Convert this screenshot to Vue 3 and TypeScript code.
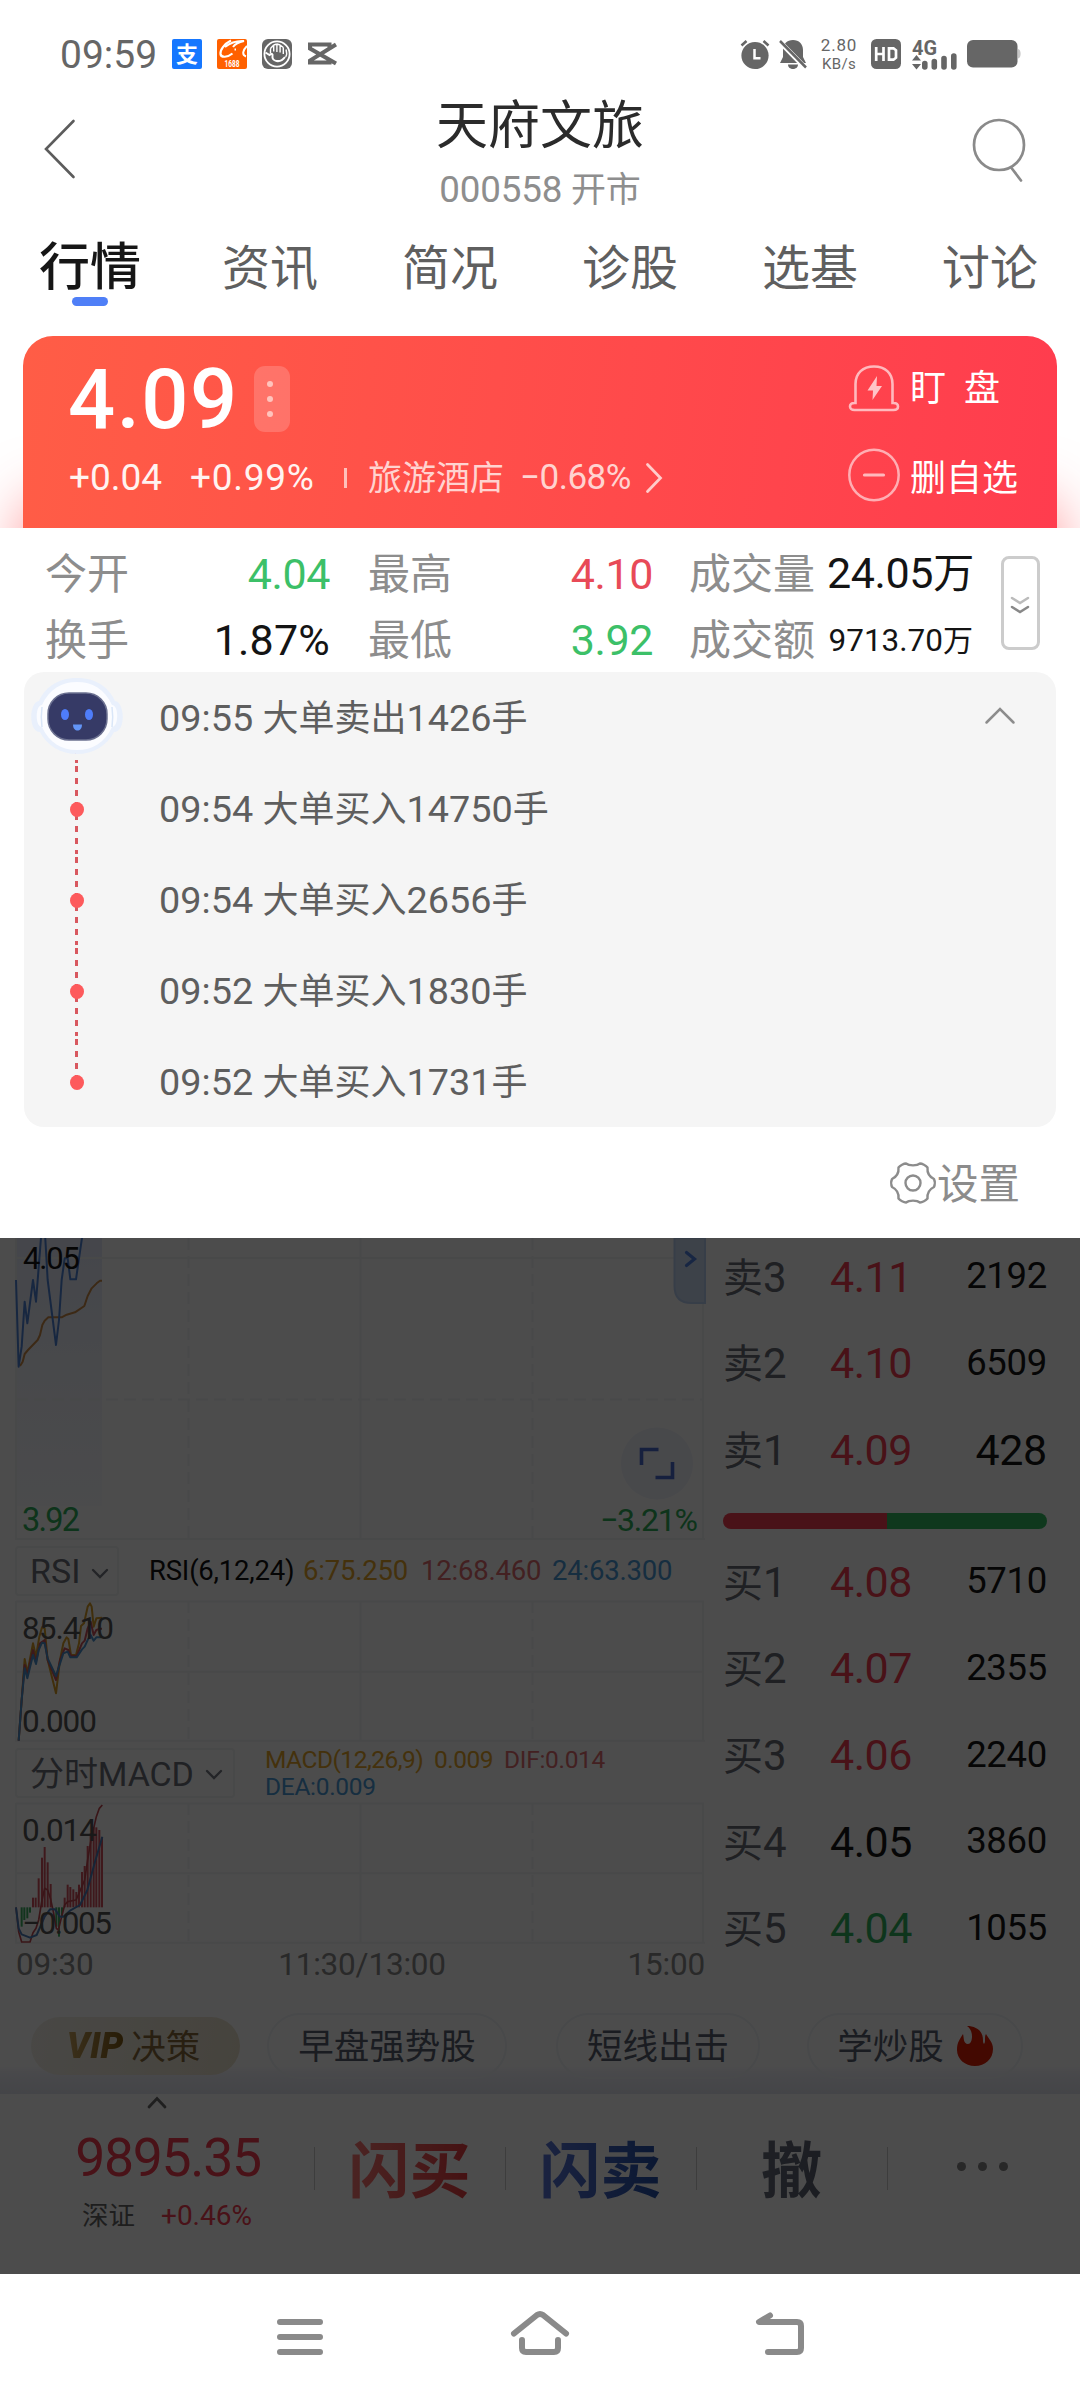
<script setup lang="ts">
import { h } from 'vue'

interface Tab { label: string; active?: boolean }
interface Alert { time: string; text: string }
interface Level { label: string; price: string; volume: string; tone: 'up' | 'down' | 'flat'; big?: boolean }

/* Sets Latin/numeric runs slightly larger than the surrounding Chinese glyphs */
const Mix = (props: { t: string }) =>
  (props.t.match(/[\u4e00-\u9fff]+|[^\u4e00-\u9fff]+/g) ?? []).map((part) =>
    h('span', { class: /[\u4e00-\u9fff]/.test(part) ? 'mix-zh' : 'mix-num' }, part),
  )
Mix.props = ['t']

const tabs: Tab[] = [
  { label: '行情', active: true },
  { label: '资讯' },
  { label: '简况' },
  { label: '诊股' },
  { label: '选基' },
  { label: '讨论' },
]

const alerts: Alert[] = [
  { time: '09:55', text: '大单卖出1426手' },
  { time: '09:54', text: '大单买入14750手' },
  { time: '09:54', text: '大单买入2656手' },
  { time: '09:52', text: '大单买入1830手' },
  { time: '09:52', text: '大单买入1731手' },
]

const asks: Level[] = [
  { label: '卖3', price: '4.11', volume: '2192', tone: 'up' },
  { label: '卖2', price: '4.10', volume: '6509', tone: 'up' },
  { label: '卖1', price: '4.09', volume: '428', tone: 'up', big: true },
]
const bids: Level[] = [
  { label: '买1', price: '4.08', volume: '5710', tone: 'up' },
  { label: '买2', price: '4.07', volume: '2355', tone: 'up' },
  { label: '买3', price: '4.06', volume: '2240', tone: 'up' },
  { label: '买4', price: '4.05', volume: '3860', tone: 'flat' },
  { label: '买5', price: '4.04', volume: '1055', tone: 'down' },
]

/* MACD histogram: [x, end y], measured from the zero axis at 1102 */
const macdUp: [number, number][] = [
  [99, 1073], [107, 1073], [116, 1015], [126, 953], [134, 921], [143, 967], [152, 1032],
  [194, 1073], [203, 1034], [211, 1041], [220, 1048], [229, 1056], [237, 1034], [246, 996],
  [254, 978], [263, 918], [272, 880], [281, 862], [289, 862], [298, 870], [306, 892],
]
const macdDown: [number, number][] = [
  [65, 1160], [73, 1140], [82, 1135], [90, 1118], [169, 1160], [177, 1190], [186, 1130],
]
</script>

<template>
  <div class="screen">
    <header class="status">
      <span class="clock">09:59</span>
      <svg class="s-icon" width="30" height="30" viewBox="0 0 30 30">
        <rect width="30" height="30" rx="2" fill="#1677ff" />
        <text x="15" y="23" font-size="22" font-weight="700" fill="#fff" text-anchor="middle">支</text>
      </svg>
      <svg class="s-icon" width="30" height="30" viewBox="0 0 30 30">
        <rect width="30" height="30" rx="2" fill="#ff6000" />
        <path d="M14 1.500C7 5 3 11 3.500 15s7 3.500 12-.5" fill="none" stroke="#fff" stroke-width="2.200" />
        <path d="M8 8C13 4 20 1.500 27 2c-5 1-9 3-11 6M30 7c-4 4-5.500 9-1 10.500M17.500 10.500h1.500" fill="none" stroke="#fff" stroke-width="2" />
        <text x="15" y="28.400" font-size="9.500" font-weight="700" fill="#fff" text-anchor="middle" textLength="15" lengthAdjust="spacingAndGlyphs">1688</text>
      </svg>
      <svg class="s-icon" width="30" height="30" viewBox="0 0 30 30">
        <rect width="30" height="30" rx="6" fill="#666" />
        <circle cx="15" cy="15" r="12.600" fill="none" stroke="#fff" stroke-width="1.800" />
        <path d="M8.500 14V9.500M11.700 12.500V6M14.900 13V5M18.100 13.500V6M21.300 15V8.500M8.500 9.500l3.200-3.500M11.700 6l3.200-1M18.100 6l-3.200-1M21.300 8.500L18.100 6M24 10.500c1 3 .8 5.500-.3 7.500" fill="none" stroke="#fff" stroke-width="1.400" />
        <path d="M3.500 13.500l4 2.500c2-2 3.500-1 3 1-.5 2.500 1 4.500 4 5s6-.5 8.500-4" fill="none" stroke="#fff" stroke-width="2" />
      </svg>
      <svg class="s-icon" width="30" height="24" viewBox="0 0 30 24">
        <path d="M29 2.500L3 18.500v2h19.500v-3M29 21.500L3 6.500v-4h19.500v3" fill="none" stroke="#666" stroke-width="4" />
      </svg>

      <span class="grow"></span>

      <svg width="30" height="31" viewBox="0 0 30 31">
        <circle cx="15" cy="16.500" r="13.600" fill="#666" />
        <path d="M1.500 6.500l5-4.500M28.500 6.500l-5-4.500" stroke="#666" stroke-width="2.600" />
        <path d="M14.500 10v9.300h6" fill="none" stroke="#fff" stroke-width="2.500" />
      </svg>
      <svg class="bell" width="28" height="31" viewBox="0 0 28 31">
        <path d="M14 1c6 0 10 4 10 10v7l3 6H1l3-6v-7C4 5 8 1 14 1zM9 25.500h10c0 6-10 6-10 0z" fill="#666" />
        <path d="M-1 1L27 29.500" stroke="#fff" stroke-width="5" />
        <path d="M1 2l26 26.500" stroke="#666" stroke-width="2.500" />
      </svg>
      <span class="speed"><b>2.80</b><i>KB/s</i></span>
      <svg class="hd" width="30" height="30" viewBox="0 0 30 30">
        <rect width="30" height="30" rx="5.500" fill="#666" />
        <path d="M5.200 8v14M12.500 8v14M5 15h8M18 9.300h4.500l2.500 2v7.400l-2.500 2H18z" fill="none" stroke="#fff" stroke-width="2.700" />
      </svg>
      <svg class="signal" width="46" height="31" viewBox="0 0 46 31">
        <text x="0" y="15.500" font-size="20.500" font-weight="700" fill="#666" textLength="25" lengthAdjust="spacingAndGlyphs">4G</text>
        <path d="M4.500 16l4.500 5.500H0zM4.500 30.500L9 25H0z" fill="#666" />
        <path d="M12.800 24.500v3.500M22.300 22.500v5.500M32 19.500V28M41.800 17v11" stroke="#666" stroke-width="5.600" stroke-linecap="round" />
      </svg>
      <svg class="battery" width="54" height="28" viewBox="0 0 54 28">
        <rect x="0" y="0" width="50.500" height="27.500" rx="6" fill="#666" />
        <path d="M51 9c3.500 0 3.500 9.500 0 9.500z" fill="#c8c8c8" />
      </svg>
    </header>

    <div class="titlebar">
      <svg class="back" width="34" height="62" viewBox="0 0 34 62">
        <path d="M30.500 3L3 31l27.500 28" fill="none" stroke="#5c5c5c" stroke-width="2.600" stroke-linecap="round" />
      </svg>
      <div class="names">
        <div class="name">天府文旅</div>
        <div class="code"><Mix t="000558 开市" /></div>
      </div>
      <svg class="search" width="56" height="66" viewBox="0 0 56 66">
        <circle cx="28" cy="28" r="25" fill="none" stroke="#8a8a8a" stroke-width="2.700" />
        <path d="M40.500 51l9.500 12.500" stroke="#8a8a8a" stroke-width="2.700" stroke-linecap="round" />
      </svg>
    </div>

    <nav class="tabs">
      <div v-for="t in tabs" :key="t.label" class="tab" :class="{ active: t.active }">
        <span>{{ t.label }}</span>
        <i v-if="t.active"></i>
      </div>
    </nav>

    <section class="hero">
      <div class="card">
        <div class="quote">
          <div class="price-line">
            <span class="price">4.09</span>
            <span class="more"><i></i><i></i><i></i></span>
          </div>
          <div class="change-line">
            <span class="chg">+0.04</span>
            <span class="pct">+0.99%</span>
            <span class="bar"></span>
            <span class="sector">旅游酒店</span>
            <span class="sector-pct">−0.68%</span>
            <svg width="18" height="32" viewBox="0 0 18 32">
              <path d="M2.500 2.500L15.500 16 2.500 29.500" fill="none" stroke="#ffcdcb" stroke-width="2.800" stroke-linecap="round" />
            </svg>
          </div>
        </div>
        <div class="actions">
          <div class="action">
            <svg width="52" height="48" viewBox="0 0 52 48">
              <path d="M7.500 39V20C7.500 9 15 2.500 26 2.500S44.500 9 44.500 20v19h1c6 0 6 7 0 7h-39c-6 0-6-7 0-7z" fill="none" stroke="#ffb9bd" stroke-width="2.600" />
              <path d="M29 12L19.500 26.500h5.500L24.500 36 34 22h-5.500z" fill="#ffc4c7" />
            </svg>
            <span class="watch">盯<em></em>盘</span>
          </div>
          <div class="action second">
            <svg width="52" height="54" viewBox="0 0 52 54">
              <ellipse cx="26" cy="27" rx="24.700" ry="25.300" fill="none" stroke="#ffaeb3" stroke-width="2.500" />
              <path d="M16.500 27h19" stroke="#ffb9bd" stroke-width="3.200" stroke-linecap="round" />
            </svg>
            <span>删自选</span>
          </div>
        </div>
      </div>
    </section>

    <section class="stats">
      <div class="grid">
        <span class="k">今开</span><span class="v green">4.04</span>
        <span class="k">最高</span><span class="v red">4.10</span>
        <span class="k">成交量</span><span class="v"><Mix t="24.05万" /></span>
        <span class="k">换手</span><span class="v">1.87%</span>
        <span class="k">最低</span><span class="v green">3.92</span>
        <span class="k">成交额</span><span class="v small"><Mix t="9713.70万" /></span>
      </div>
      <div class="expand">
        <svg width="20" height="20" viewBox="0 0 20 20" fill="none" stroke-width="2.500" stroke-linecap="round">
          <path d="M2 3l8 5 8-5" stroke="#bbb" />
          <path d="M2 12l8 5 8-5" stroke="#888" />
        </svg>
      </div>
    </section>

    <section class="alerts">
      <div v-for="(a, i) in alerts" :key="i" class="alert" :class="{ first: i === 0, last: i === alerts.length - 1 }">
        <div class="rail">
          <svg v-if="i === 0" class="robot" width="94" height="78" viewBox="0 0 94 78">
            <path d="M9 24C16 8 31 1 47 1s31 7 38 23c10 1 11 31-1 31C77 69 63 77 47 77S17 69 10 55C-2 55-1 25 9 24z" fill="#e9f0fc" />
            <path d="M12 28C19 12 32 5 47 5s28 7 35 23c7 0 7 22 0 22C75 66 62 73 47 73S19 66 12 50c-7 0-7-22 0-22z" fill="#fbfcff" />
            <path d="M12 30c-1 7-1 13 0 20M82 30c1 7 1 13 0 20" fill="none" stroke="#d9e6f8" stroke-width="1.500" />
            <rect x="18" y="16" width="59" height="47" rx="21" fill="#363a66" stroke="#6b7090" stroke-width="1.500" />
            <ellipse cx="35" cy="37.500" rx="4" ry="5.500" fill="#4f7dfa" />
            <ellipse cx="59" cy="37.500" rx="4" ry="5.500" fill="#4f7dfa" />
            <path d="M43 47.500h9c0 8-9 8-9 0z" fill="#6395f7" />
          </svg>
          <i v-else class="dot"></i>
        </div>
        <div class="msg"><Mix :t="a.time + ' ' + a.text" /></div>
        <svg v-if="i === 0" class="fold" width="32" height="20" viewBox="0 0 32 20">
          <path d="M2.500 16.500L16 3l13.500 13.500" fill="none" stroke="#8c8c8c" stroke-width="2.500" stroke-linecap="round" />
        </svg>
      </div>
    </section>

    <div class="settings">
      <svg width="46" height="44" viewBox="-23 -22 46 44" fill="none" stroke="#8c8c8c" stroke-width="2.400" stroke-linejoin="round">
        <path d="M-7-19.500C-4-17 4-17 7-19.500c2 0 6 2 7.500 4C14-10 16-6.500 21-4c1 2 1 6 0 8-5 2.500-7 6-6.500 11.500-1.500 2-5.500 4-7.500 4C4 17-4 17-7 19.500c-2 0-6-2-7.500-4C-14 10-16 6.500-21 4c-1-2-1-6 0-8 5-2.500 7-6 6.500-11.500 1.500-2 5.500-4 7.500-4z" />
        <circle r="7.500" />
      </svg>
      <span>设置</span>
    </div>

    <section class="dimmed">
      <div class="market">
        <div class="charts">
          <svg class="plot" width="712" height="304" viewBox="0 1238 712 304">
            <defs>
              <linearGradient id="area" x1="0" y1="0" x2="0" y2="1">
                <stop offset="0" stop-color="#e6ebfb" />
                <stop offset="1" stop-color="#eef1fa" stop-opacity=".3" />
              </linearGradient>
            </defs>
            <rect x="16" y="1238" width="86" height="268" fill="url(#area)" />
            <g stroke="#f0f4f6" stroke-width="2" fill="none">
              <path d="M16 1238v302M360.500 1238v302M703 1238v302M16 1258h688M15 1539h690" />
              <path d="M16 1399.500h688M188.500 1238v302M532.500 1238v302" stroke-dasharray="12 6" />
            </g>
            <g transform="translate(0 1220) scale(.33333)" fill="none" stroke-width="6" stroke-linejoin="round">
              <path stroke="#c98a48" d="M60 438L68 425 74 402 84 390 113 360 120 345 127 315 134 302 145 292 185 292 200 284 225 277 253 258 263 228 275 205 290 190 300 182 306 182" />
              <path stroke="#4d82d8" d="M48 180L56 440 65 380 74 245 82 310 99 180 108 245 124 40 135 40 143 180 168 375 177 300 185 180 194 115 203 115 211 178 228 178 237 115 248 40" />
            </g>
            <g class="lbl" font-size="31">
              <text x="23" y="1269" fill="#161616" textLength="57">4.05</text>
              <text x="22" y="1531" fill="#2fae5a" font-size="32.500" textLength="58">3.92</text>
              <text x="600" y="1530.500" fill="#2fae5a" font-size="32" textLength="98">−3.21%</text>
            </g>
            <path d="M674.500 1238v48q0 17 17 17H705v-65z" fill="#ccdcf5" stroke="#b9cff2" stroke-width="2" />
            <path d="M686.500 1252.500l8 6.500-8 6.500" fill="none" stroke="#4f7fe0" stroke-width="3.200" stroke-linecap="round" />
            <circle cx="657" cy="1463.500" r="36" fill="#f1f3fc" />
            <path d="M641.500 1465v-15.500h17M655.500 1477.500h17V1462" fill="none" stroke="#4a6cd0" stroke-width="3.600" />
          </svg>

          <div class="indicator rsi">
            <div class="select">
              <span>RSI</span>
              <svg width="18" height="12" viewBox="0 0 18 12"><path d="M2 2l7 7 7-7" fill="none" stroke="#777b84" stroke-width="2.400" stroke-linecap="round" /></svg>
            </div>
            <div class="values">
              <span class="ink">RSI(6,12,24)</span>
              <span class="amber">6:75.250</span>
              <span class="rose">12:68.460</span>
              <span class="sky">24:63.300</span>
            </div>
          </div>

          <svg class="plot" width="712" height="144" viewBox="0 1600 712 144">
            <g stroke="#f0f4f6" stroke-width="2" fill="none">
              <path d="M16 1601v140M360.500 1601v140M703 1601v140M16 1601.500h688M16 1671.700h688M15 1740.700h690" />
              <path d="M188.500 1601v140M532.500 1601v140" stroke-dasharray="12 6" />
            </g>
            <g transform="translate(0 1540) scale(.33333)" fill="none" stroke-width="6" stroke-linejoin="round">
              <path stroke="#d69c26" d="M56 602L65 480 74 357 82 398 99 310 108 350 118 290 126 262 134 265 143 360 168 460 180 360 190 310 200 292 205 297 213 345 228 345 237 310 243 258 252 250 263 200 270 190 275 200 281 260 289 235 306 233" />
              <path stroke="#c9535c" d="M56 602L65 480 74 375 82 405 99 330 108 365 120 310 134 300 143 360 168 420 180 360 194 325 205 330 213 348 230 348 246 310 254 302 263 265 272 245 281 285 289 270 300 266 306 266" />
              <path stroke="#4a90cc" d="M56 602L65 480 74 385 82 415 99 345 108 372 116 330 126 308 134 310 143 355 168 408 177 380 190 340 203 335 211 352 230 352 246 328 254 320 263 300 272 285 281 302 289 292 306 292" />
            </g>
            <g class="lbl" font-size="31.500" fill="#555">
              <text x="22" y="1638.500" textLength="92">85.410</text>
              <text x="22" y="1731.500" textLength="75">0.000</text>
            </g>
          </svg>

          <div class="indicator macd">
            <div class="select">
              <span>分时MACD</span>
              <svg width="18" height="12" viewBox="0 0 18 12"><path d="M2 2l7 7 7-7" fill="none" stroke="#777b84" stroke-width="2.400" stroke-linecap="round" /></svg>
            </div>
            <div class="values">
              <span class="amber">MACD(12,26,9)</span>
              <span class="amber">0.009</span>
              <span class="rose">DIF:0.014</span>
              <span class="sky">DEA:0.009</span>
            </div>
          </div>

          <svg class="plot" width="712" height="144" viewBox="0 1801 712 144">
            <g stroke="#f0f4f6" stroke-width="2" fill="none">
              <path d="M16 1803v140M360.500 1803v140M703 1803v140M16 1803.500h688M16 1873.300h688M15 1942.700h690" />
              <path d="M188.500 1803v140M532.500 1803v140" stroke-dasharray="12 6" />
            </g>
            <g transform="translate(0 1540) scale(.33333)" fill="none" stroke-linejoin="round">
              <path v-for="b in macdUp" :key="'u' + b[0]" :d="`M${b[0]} 1102V${b[1]}`" stroke="#d4525e" stroke-width="6" />
              <path v-for="b in macdDown" :key="'d' + b[0]" :d="`M${b[0]} 1102V${b[1]}`" stroke="#3cae62" stroke-width="6" />
              <path stroke="#c04850" stroke-width="5" d="M48 1102L56 1175 65 1206 90 1206 99 1178 108 1165 116 1140 126 1080 134 1045 143 1050 152 1078 160 1115 169 1165 175 1170 185 1130 194 1095 203 1085 228 1080 237 1060 254 1020 263 960 272 905 289 830 298 805 307 795" />
              <path stroke="#4c7cba" stroke-width="6" d="M48 1102L56 1165 65 1183 90 1193 110 1185 134 1130 150 1108 165 1108 180 1130 190 1130 210 1112 240 1095 262 1050 285 965 307 890" />
            </g>
            <g class="lbl" font-size="31.500" fill="#555">
              <text x="22" y="1840.500" textLength="75">0.014</text>
              <text x="22" y="1933.500" textLength="90">−0.005</text>
            </g>
          </svg>

          <div class="times"><span>09:30</span><span>11:30/13:00</span><span>15:00</span></div>
        </div>

        <div class="book">
          <div v-for="l in asks" :key="l.label" class="level">
            <span class="side"><Mix :t="l.label" /></span>
            <span class="lp" :class="l.tone">{{ l.price }}</span>
            <span class="vol" :class="{ big: l.big }">{{ l.volume }}</span>
          </div>
          <div class="ratio"><i></i><b></b></div>
          <div v-for="l in bids" :key="l.label" class="level">
            <span class="side"><Mix :t="l.label" /></span>
            <span class="lp" :class="l.tone">{{ l.price }}</span>
            <span class="vol">{{ l.volume }}</span>
          </div>
        </div>
      </div>

      <div class="chips">
        <div class="chip vip"><strong>VIP</strong><span>决策</span></div>
        <div class="chip c2"><span>早盘强势股</span></div>
        <div class="chip c3"><span>短线出击</span></div>
        <div class="chip c4">
          <span>学炒股</span>
          <svg width="36" height="42" viewBox="0 0 36 42">
            <path d="M10 1c8 0 16 4 16 14 0 5 2 5 2 0 0-3 0-5 1-6 2 4 7 8 7 15C36 34 28 41 18 41S0 34 0 25c0-8 3-11 6-16 1 3 0 10 5 10s6-14-1-18z" fill="#e01f06" />
          </svg>
        </div>
      </div>

      <div class="trade">
        <div class="index">
          <svg width="20" height="13" viewBox="0 0 20 13"><path d="M2 11l8-8.500 8 8.500" fill="none" stroke="#6a6a6a" stroke-width="2.800" stroke-linecap="round" /></svg>
          <div class="idx">9895.35</div>
          <div class="sub"><span>深证</span><em>+0.46%</em></div>
        </div>
        <div class="btn buy"><span>闪买</span></div>
        <div class="btn sell"><span>闪卖</span></div>
        <div class="btn cancel"><span>撤</span></div>
        <div class="btn dots"><i></i><i></i><i></i></div>
      </div>
      <div class="mask"></div>
    </section>

    <footer class="navbar">
      <svg width="60" height="60" viewBox="270 2306 60 60"><path d="M280 2322h40M280 2337h40M280 2352h40" /></svg>
      <svg width="60" height="60" viewBox="510 2306 60 60">
        <path d="M514 2333.500l23-18.500q3-2 6 0l23 18.500M522 2340v8q0 4 4 4h28q4 0 4-4v-8" />
      </svg>
      <svg width="60" height="60" viewBox="750 2306 60 60">
        <path d="M770 2315.500l-11 6.500h38q4 0 4 4v22q0 4-4 4h-29" />
      </svg>
    </footer>
  </div>
</template>

<style>
body {
  margin: 0;
  background: #fff;
}
.mix-num {
  font-size: 1.05em;
}
</style>

<style scoped>
.screen {
  width: 1080px;
  height: 2400px;
  display: flex;
  flex-direction: column;
  background: #fff;
  color: #1a1a1a;
  font-family: Roboto, "Noto Sans CJK SC", sans-serif;
  overflow: hidden;
  white-space: nowrap;
}
.screen svg { display: block; flex: none; }
i, em { font-style: normal; }

.status {
  height: 92px;
  flex: none;
  box-sizing: border-box;
  padding: 16px 59px 0 60px;
  display: flex;
  align-items: center;
}
.clock { width: 112px; font-size: 39px; line-height: 44px; color: #666; padding-top: 1px; }
.s-icon { margin-right: 15px; }
.grow { flex: 1; }
.bell { margin-left: 9px; }
.speed {
  display: flex;
  flex-direction: column;
  align-items: center;
  width: 40px;
  margin: -1px 12px 0 12px;
  color: #666;
}
.speed b { font-weight: 400; font-size: 17px; line-height: 20px; letter-spacing: .8px; }
.speed i { font-size: 15px; line-height: 18px; letter-spacing: .3px; }
.signal { margin-left: 11px; }
.screen .signal { overflow: visible; }
.battery { margin-left: 9px; }

.titlebar {
  height: 128px;
  flex: none;
  box-sizing: border-box;
  padding: 0 53px 0 43px;
  display: flex;
  justify-content: space-between;
}
.back { margin-top: 26px; }
.names { text-align: center; padding-left: 32px; }
.name { font-size: 52px; line-height: 68px; color: #2b2b2b; padding-top: 1px; }
.code { font-size: 35px; line-height: 58px; color: #8e8e8e; letter-spacing: -.2px; }
.search { margin-top: 25px; }

.tabs { height: 116px; flex: none; display: flex; }
.tab { width: 180px; display: flex; flex-direction: column; align-items: center; color: #5f5f5f; }
.tab span { font-size: 48px; line-height: 60px; margin-top: 19px; }
.tab.active span { font-size: 51px; line-height: 62px; margin-top: 17px; font-weight: 500; color: #161616; }
.tab i { width: 36px; height: 9px; border-radius: 5px; background: #4f7ff7; margin-top: -2px; }

.hero { height: 192px; flex: none; padding: 0 23px; overflow: hidden; }
.card {
  height: 260px;
  border-radius: 30px;
  background: linear-gradient(97deg, #ff5d46 0%, #ff4e4a 45%, #ff3c4e 100%);
  box-shadow: 0 165px 56px 4px rgba(255, 60, 64, .5);
  display: flex;
  justify-content: space-between;
  color: #fff;
}
.quote { padding: 26px 0 0 46px; }
.price-line { display: flex; align-items: center; height: 76px; }
.price { font-size: 83px; font-weight: 500; line-height: 76px; letter-spacing: 1.500px; width: 186px; margin-left: -1px; }
.more {
  width: 36px;
  height: 66px;
  border-radius: 11px;
  background: rgba(255, 255, 255, .18);
  display: flex;
  flex-direction: column;
  align-items: center;
  justify-content: center;
  gap: 9px;
  margin-top: -3px;
}
.more i { width: 6px; height: 6px; border-radius: 3px; background: #ffc4bd; margin-left: -5px; }
.change-line { display: flex; align-items: center; height: 40px; margin-top: 20px; line-height: 40px; font-size: 37px; color: #fff3f1; }
.chg { width: 121px; }
.pct { width: 154px; letter-spacing: .7px; }
.bar { width: 3px; height: 20px; background: #ffc0bb; }
.sector { width: 152px; margin-left: 21px; font-size: 34px; color: #ffd3d0; }
.sector-pct { width: 125px; font-size: 35px; letter-spacing: -.5px; color: #ffd3d0; }
.actions { width: 209px; padding-top: 24px; }
.action { height: 56px; display: flex; align-items: center; gap: 10px; font-size: 36px; line-height: 56px; }
.second { margin-top: 31px; }
.watch { display: flex; margin-top: 1px; }
.watch em { width: 18px; }
.second span { margin-top: 8px; }

.stats { height: 144px; flex: none; box-sizing: border-box; padding: 13px 40px 0 45px; display: flex; }
.grid {
  display: grid;
  grid-template-columns: 140px 183px 139px 182px 138px 146px;
  grid-template-rows: 66px 66px;
  line-height: 66px;
  width: 956px;
}
.k { font-size: 42px; color: #8d8d8d; padding-top: 1px; margin-bottom: -1px; }
.v { font-size: 43px; text-align: right; color: #141414; letter-spacing: -.4px; }
.v:nth-child(2), .v:nth-child(8) { padding-right: 38px; }
.v:nth-child(4), .v:nth-child(10) { padding-right: 36px; }
.v:nth-child(8) { letter-spacing: .2px; }
.v:nth-child(6) { font-size: 41px; }
.v.small { font-size: 30px; letter-spacing: 0; padding-top: 1px; margin-bottom: -1px; }
.green { color: #3cc068; }
.red { color: #e84a57; }
.expand {
  flex: none;
  width: 33px;
  height: 88px;
  margin: 15px 0 0 0;
  border: 3px solid #ccc;
  border-radius: 8px;
  display: flex;
  align-items: center;
  justify-content: center;
}
.expand svg { margin: 4px 2px 0 0; }

.alerts { height: 455px; flex: none; margin: 0 24px; background: #f5f5f5; border-radius: 20px; }
.alert { height: 91px; display: flex; align-items: center; position: relative; }
.rail {
  width: 105px;
  height: 91px;
  display: flex;
  align-items: center;
  justify-content: center;
  flex: none;
  background:
    repeating-linear-gradient(180deg, transparent 0 3px, #d8585f 3px 9px, transparent 9px 12px) 51px 0 / 3px 100% no-repeat;
}
.first .rail { background-size: 3px 18px; background-position: 51px 100%; }
.last .rail { background-size: 3px 45px; }
.robot { margin-top: -4px; }
.dot { width: 14px; height: 15px; border-radius: 50%; background: #fd5a5c; margin-top: 1px; }
.msg { flex: 1; padding: 2px 0 0 30px; font-size: 36px; line-height: 60px; color: #5e5e5e; }
.fold { margin: -4px 40px 0 0; }

.settings {
  height: 111px;
  flex: none;
  display: flex;
  align-items: center;
  justify-content: flex-end;
  gap: 1px;
  padding-right: 60px;
  font-size: 41.500px;
  color: #8c8c8c;
}
.settings span { margin-top: -3px; }

.dimmed { height: 1036px; flex: none; position: relative; background: #fff; }
.mask { position: absolute; inset: 0; background: rgba(0, 0, 0, .7); }
.market { display: flex; height: 754px; }
.charts { width: 712px; flex: none; }
.indicator { display: flex; align-items: center; padding-left: 15px; box-sizing: border-box; }
.rsi { height: 58px; }
.macd { height: 57px; }
.select {
  height: 46px;
  box-sizing: content-box;
  border: 2px solid #f1f3f4;
  border-radius: 4px;
  display: flex;
  align-items: center;
  padding: 0 12px 0 13px;
  gap: 11px;
  font-size: 34px;
  color: #6b6e78;
}
.select svg { margin-top: 5px; }
.rsi .select { width: 75px; margin-right: 30px; }
.rsi .select span { margin-top: -1px; }
.macd .select { width: 191px; margin-right: 30px; font-size: 34px; }
.macd .select span { margin-top: -3px; letter-spacing: -.1px; }
.values { display: flex; line-height: 34px; letter-spacing: -.2px; }
.rsi .values .ink { width: 154px; }
.rsi .values { font-size: 27.500px; }
.rsi .amber { width: 118px; }
.rsi .rose { width: 131px; }
.macd .values { flex-wrap: wrap; width: 380px; font-size: 24.500px; line-height: 27px; letter-spacing: -.5px; }
.macd .values span:nth-child(1) { width: 169px; }
.macd .values span:nth-child(2) { width: 70px; }
.macd .values span:nth-child(3) { width: 120px; letter-spacing: -.3px; }
.macd .values span:nth-child(4) { letter-spacing: -.3px; }
.ink { color: #111; }
.amber { color: #e5a52a; }
.rose { color: #e06c70; }
.sky { color: #4c9ad8; }
.times {
  display: flex;
  justify-content: space-between;
  padding: 0 7px 0 16px;
  margin-top: 2px;
  font-size: 31.500px;
  line-height: 36px;
  letter-spacing: -.2px;
  color: #8a8a8a;
}
.times span:nth-child(2) { margin-left: 3px; }

.book { width: 324px; padding-left: 11px; }
.level { height: 86.700px; display: flex; align-items: center; }
.level:first-child { height: 77px; margin-bottom: 5px; }
.side { width: 107px; font-size: 40px; color: #686c76; box-sizing: border-box; margin-top: -4px; }
.lp { width: 96px; font-size: 43px; letter-spacing: -.5px; }
.up { color: #f43c50; }
.down { color: #2fb35e; }
.flat { color: #141414; }
.vol { flex: 1; text-align: right; font-size: 36.500px; color: #141414; margin-top: -2px; letter-spacing: -.3px; }
.vol.big { font-size: 43px; margin: 0; }
.ratio { display: flex; height: 16px; border-radius: 8px; overflow: hidden; margin: 20px 0 9px; }
.ratio i { width: 164px; background: #f43c50; }
.ratio b { flex: 1; background: #35bd63; }

.chips {
  height: 102px;
  display: flex;
  align-items: flex-start;
  padding: 21px 0 0 31px;
  box-sizing: border-box;
  background: linear-gradient(180deg, transparent 72%, #f2f3fb 80%, #e4e6f0 100%);
}
.chip {
  box-sizing: border-box;
  height: 66px;
  border: 2px solid #f0f4f7;
  border-radius: 33px;
  font-size: 35.500px;
  line-height: 62px;
  color: #596070;
  display: flex;
  justify-content: center;
  align-items: center;
}
.chip span { margin-top: 2px; }
.vip {
  width: 209px;
  height: 58px;
  margin-top: 4px;
  border: 0;
  background: linear-gradient(100deg, #f3f0e8, #ebe2cd);
  color: #86683a;
  gap: 5px;
  font-size: 34.500px;
  line-height: 58px;
}
.vip strong {
  font-size: 36px;
  font-style: italic;
  font-weight: 900;
  padding-right: 3px;
  margin-left: -4px;
  background: linear-gradient(90deg, #c8a35e, #7d5812);
  -webkit-background-clip: text;
  background-clip: text;
  color: transparent;
}
.c2 { width: 240px; margin-left: 27px; }
.c3 { width: 204px; margin-left: 49px; }
.c4 { width: 216px; margin-left: 47px; gap: 13px; }

.trade { height: 180px; display: flex; background: #fff; }
.index { width: 314px; display: flex; flex-direction: column; align-items: center; }
.index > svg { margin-top: 2px; }
.idx { font-size: 53.500px; line-height: 60px; color: #f43c50; letter-spacing: -1.300px; margin: 19px 0 0 22px; }
.sub { font-size: 26.500px; line-height: 40px; display: flex; gap: 26px; margin: 8px 0 0 20px; color: #666; }
.sub em { font-size: 28px; color: #f43c50; }
.btn {
  width: 191px;
  height: 108px;
  padding-top: 22px;
  display: flex;
  justify-content: center;
  align-items: center;
  font-size: 61px;
  font-weight: 700;
  background: linear-gradient(#ccc, #ccc) 0 53px / 1px 43px no-repeat;
}
.btn span { margin-top: -8px; }
.buy span, .sell span, .cancel span { -webkit-background-clip: text; background-clip: text; color: transparent; }
.buy span { background-image: linear-gradient(90deg, #fa7a76, #e63c40); }
.sell span { background-image: linear-gradient(90deg, #5b76d8, #2450a8); }
.cancel span { background-image: linear-gradient(90deg, #666c7c, #5c6172); }
.dots { gap: 12px; }
.dots i { width: 9px; height: 9px; border-radius: 5px; background: #858585; margin-top: -7px; }

.navbar { height: 126px; display: flex; justify-content: center; gap: 180px; padding-top: 32px; box-sizing: border-box; }
.navbar path { fill: none; stroke: #8a8a8a; stroke-width: 6; stroke-linecap: round; stroke-linejoin: round; }
</style>
